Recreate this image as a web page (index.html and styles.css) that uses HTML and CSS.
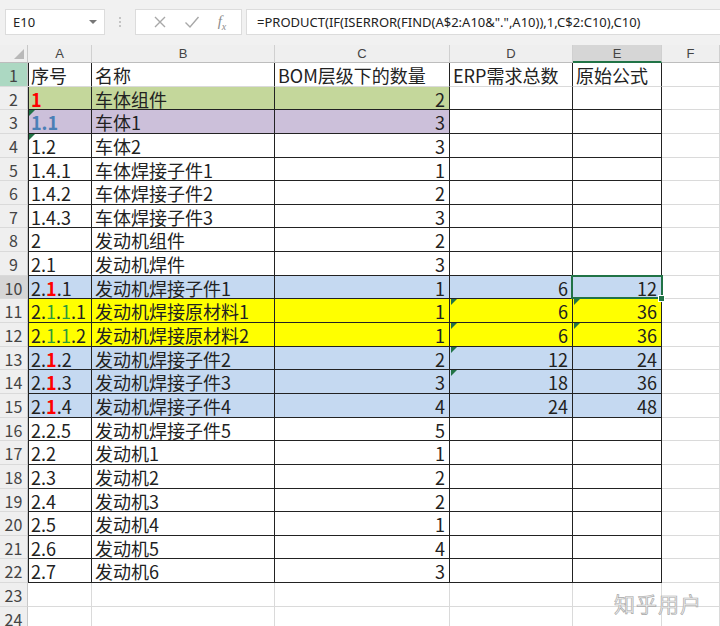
FILE: index.html
```html
<!DOCTYPE html>
<html lang="zh-CN">
  <head>
    <meta charset="UTF-8" />
    <title>BOM 数量</title>
    <link rel="stylesheet" href="styles.css">
  </head>
  <body>
    <div class="toolbar">
      <div class="namebox">E10<span class="arrow"></span></div>
      <div class="grip"><i></i><i></i><i></i></div>
      <div class="btns">
        <svg class="ico" width="14" height="14" viewBox="0 0 14 14"><path d="M2 2 L12 12 M12 2 L2 12" stroke="#a8a8a8" stroke-width="1.4" fill="none"/></svg>
        <svg class="ico" width="16" height="14" viewBox="0 0 16 14"><path d="M1.5 7.5 L6 12 L14.5 2" stroke="#a8a8a8" stroke-width="1.4" fill="none"/></svg>
        <span class="fx">f<sub>x</sub></span>
      </div>
      <div class="formula">=PRODUCT(IF(ISERROR(FIND(A$2:A10&amp;".",A10)),1,C$2:C10),C10)</div>
    </div>

    <div class="sheet">
      <div class="corner"><span class="corner-tri"></span></div>
      <div class="colh">A</div>
      <div class="colh">B</div>
      <div class="colh">C</div>
      <div class="colh">D</div>
      <div class="colh colh-on">E</div>
      <div class="colh">F</div>

      <div class="rh rh-green">1</div>
      <div class="c t a top">序号</div>
      <div class="c t top">名称</div>
      <div class="c t top">BOM层级下的数量</div>
      <div class="c t top">ERP需求总数</div>
      <div class="c t top">原始公式</div>
      <div class="c"></div>

      <div class="rh">2</div>
      <div class="c t a g"><b class="red">1</b></div>
      <div class="c t g">车体组件</div>
      <div class="c t g n">2</div>
      <div class="c t"></div>
      <div class="c t"></div>
      <div class="c"></div>

      <div class="rh">3</div>
      <div class="c t a p tri"><b class="blue">1.1</b></div>
      <div class="c t p">车体1</div>
      <div class="c t p n">3</div>
      <div class="c t"></div>
      <div class="c t"></div>
      <div class="c"></div>

      <div class="rh">4</div>
      <div class="c t a tri">1.2</div>
      <div class="c t">车体2</div>
      <div class="c t n">3</div>
      <div class="c t"></div>
      <div class="c t"></div>
      <div class="c"></div>

      <div class="rh">5</div>
      <div class="c t a">1.4.1</div>
      <div class="c t">车体焊接子件1</div>
      <div class="c t n">1</div>
      <div class="c t"></div>
      <div class="c t"></div>
      <div class="c"></div>

      <div class="rh">6</div>
      <div class="c t a">1.4.2</div>
      <div class="c t">车体焊接子件2</div>
      <div class="c t n">2</div>
      <div class="c t"></div>
      <div class="c t"></div>
      <div class="c"></div>

      <div class="rh">7</div>
      <div class="c t a">1.4.3</div>
      <div class="c t">车体焊接子件3</div>
      <div class="c t n">3</div>
      <div class="c t"></div>
      <div class="c t"></div>
      <div class="c"></div>

      <div class="rh">8</div>
      <div class="c t a">2</div>
      <div class="c t">发动机组件</div>
      <div class="c t n">2</div>
      <div class="c t"></div>
      <div class="c t"></div>
      <div class="c"></div>

      <div class="rh">9</div>
      <div class="c t a">2.1</div>
      <div class="c t">发动机焊件</div>
      <div class="c t n">3</div>
      <div class="c t"></div>
      <div class="c t"></div>
      <div class="c"></div>

      <div class="rh rh-on">10</div>
      <div class="c t a bl">2.<b class="red">1</b>.1</div>
      <div class="c t bl">发动机焊接子件1</div>
      <div class="c t bl n">1</div>
      <div class="c t bl n">6</div>
      <div class="c t bl n sel">12<span class="handle"></span></div>
      <div class="c"></div>

      <div class="rh">11</div>
      <div class="c t a y">2.<span class="green">1</span>.<span class="green">1</span>.1</div>
      <div class="c t y">发动机焊接原材料1</div>
      <div class="c t y n">1</div>
      <div class="c t y n tri">6</div>
      <div class="c t y n tri">36</div>
      <div class="c"></div>

      <div class="rh">12</div>
      <div class="c t a y">2.<span class="green">1</span>.<span class="green">1</span>.2</div>
      <div class="c t y">发动机焊接原材料2</div>
      <div class="c t y n">1</div>
      <div class="c t y n tri">6</div>
      <div class="c t y n tri">36</div>
      <div class="c"></div>

      <div class="rh">13</div>
      <div class="c t a bl">2.<b class="red">1</b>.2</div>
      <div class="c t bl">发动机焊接子件2</div>
      <div class="c t bl n">2</div>
      <div class="c t bl n tri">12</div>
      <div class="c t bl n">24</div>
      <div class="c"></div>

      <div class="rh">14</div>
      <div class="c t a bl">2.<b class="red">1</b>.3</div>
      <div class="c t bl">发动机焊接子件3</div>
      <div class="c t bl n">3</div>
      <div class="c t bl n tri">18</div>
      <div class="c t bl n">36</div>
      <div class="c"></div>

      <div class="rh">15</div>
      <div class="c t a bl">2.<b class="red">1</b>.4</div>
      <div class="c t bl">发动机焊接子件4</div>
      <div class="c t bl n">4</div>
      <div class="c t bl n">24</div>
      <div class="c t bl n">48</div>
      <div class="c"></div>

      <div class="rh">16</div>
      <div class="c t a">2.2.5</div>
      <div class="c t">发动机焊接子件5</div>
      <div class="c t n">5</div>
      <div class="c t"></div>
      <div class="c t"></div>
      <div class="c"></div>

      <div class="rh">17</div>
      <div class="c t a">2.2</div>
      <div class="c t">发动机1</div>
      <div class="c t n">1</div>
      <div class="c t"></div>
      <div class="c t"></div>
      <div class="c"></div>

      <div class="rh">18</div>
      <div class="c t a">2.3</div>
      <div class="c t">发动机2</div>
      <div class="c t n">2</div>
      <div class="c t"></div>
      <div class="c t"></div>
      <div class="c"></div>

      <div class="rh">19</div>
      <div class="c t a">2.4</div>
      <div class="c t">发动机3</div>
      <div class="c t n">2</div>
      <div class="c t"></div>
      <div class="c t"></div>
      <div class="c"></div>

      <div class="rh">20</div>
      <div class="c t a">2.5</div>
      <div class="c t">发动机4</div>
      <div class="c t n">1</div>
      <div class="c t"></div>
      <div class="c t"></div>
      <div class="c"></div>

      <div class="rh">21</div>
      <div class="c t a">2.6</div>
      <div class="c t">发动机5</div>
      <div class="c t n">4</div>
      <div class="c t"></div>
      <div class="c t"></div>
      <div class="c"></div>

      <div class="rh">22</div>
      <div class="c t a">2.7</div>
      <div class="c t">发动机6</div>
      <div class="c t n">3</div>
      <div class="c t"></div>
      <div class="c t"></div>
      <div class="c"></div>

      <div class="rh">23</div>
      <div class="c"></div>
      <div class="c"></div>
      <div class="c"></div>
      <div class="c"></div>
      <div class="c"></div>
      <div class="c"></div>

      <div class="rh">24</div>
      <div class="c"></div>
      <div class="c"></div>
      <div class="c"></div>
      <div class="c"></div>
      <div class="c"></div>
      <div class="c"></div>
    </div>

    <div class="watermark">知乎用户</div>
  </body>
</html>
```

FILE: styles.css
```css
body {
  margin: 0;
  width: 720px;
  height: 626px;
  overflow: hidden;
  background: #fff;
  font-family: "Noto Sans CJK SC", "Noto Sans", sans-serif;
  color: #222;
  position: relative;
}

/* formula bar */
.toolbar {
  height: 45px;
  box-sizing: border-box;
  padding: 9px 0 0 5px;
  background: #f1f1f1;
  display: flex;
  align-items: flex-start;
}
.namebox,
.btns,
.formula {
  height: 26px;
  box-sizing: border-box;
  background: #fff;
  border: 1px solid #dcdcdc;
}
.namebox {
  width: 100px;
  padding-left: 7px;
  font-family: "Noto Sans", sans-serif;
  font-size: 13px;
  line-height: 24px;
  position: relative;
}
.arrow {
  position: absolute;
  right: 7px;
  top: 10px;
  border: 4px solid transparent;
  border-top: 4px solid #777;
  border-bottom: 0;
}
.grip {
  width: 30px;
  display: flex;
  flex-direction: column;
  align-items: center;
  gap: 2px;
  padding-top: 8px;
}
.grip i {
  width: 2px;
  height: 2px;
  background: #c4c4c4;
}
.btns {
  width: 107px;
  display: flex;
  align-items: center;
  justify-content: space-around;
  padding: 0 6px 0 8px;
}
.fx {
  font-family: "Liberation Serif", serif;
  font-style: italic;
  font-size: 15px;
  color: #8c8c8c;
}
.fx sub {
  font-size: 10px;
}
.formula {
  flex: 1;
  margin-left: 4px;
  border-right: 0;
  padding-left: 10px;
  font-family: "Noto Sans", sans-serif;
  font-size: 13px;
  line-height: 24px;
  white-space: nowrap;
  overflow: hidden;
}

/* grid */
.sheet {
  display: grid;
  grid-template-columns: 28px 64px 183px 175px 123px 89px 1fr;
  grid-template-rows: 18px;
  grid-auto-rows: 23.65px;
}
.corner,
.colh,
.rh {
  background: #efefef;
  color: #444;
  box-sizing: border-box;
  font-size: 16px;
}
.corner {
  border-right: 1px solid #c8c8c8;
  border-bottom: 1px solid #bdbdbd;
  position: relative;
}
.corner-tri {
  position: absolute;
  right: 3px;
  bottom: 3px;
  border-left: 10px solid transparent;
  border-bottom: 10px solid #b9b9b9;
}
.colh {
  text-align: center;
  font-family: "Liberation Sans", sans-serif;
  font-size: 13px;
  line-height: 17px;
  border-right: 1px solid #d0d0d0;
  border-bottom: 1px solid #bdbdbd;
}
.colh-on {
  background: #d6d6d6;
  border-bottom: 2px solid #217346;
}
.rh {
  text-align: center;
  line-height: 24px;
  border-right: 1px solid #c8c8c8;
  border-bottom: 1px solid #dadada;
}
.rh-green {
  background: #acd8c2;
}
.rh-on {
  background: #d6d6d6;
}

.c {
  box-sizing: border-box;
  border-right: 1px solid #dadada;
  border-bottom: 1px solid #dadada;
  padding: 1px 4px 0 3px;
  font-size: 18px;
  line-height: 22px;
  white-space: nowrap;
  overflow: hidden;
  position: relative;
}
.t {
  border-right-color: #222;
  border-bottom-color: #222;
}
.top {
  border-bottom-color: #dadada;
}
.a {
  box-shadow: inset 1px 0 0 #222;
}
.n {
  text-align: right;
}

.g {
  background: #c4d79b;
}
.p {
  background: #ccc0da;
}
.bl {
  background: #c5d9f1;
}
.y {
  background: #ffff00;
}

.red {
  color: #ff0000;
}
.blue {
  color: #4a7fb6;
}
.green {
  color: #2f9a3c;
}

/* error marks and selection */
.tri::before {
  content: "";
  position: absolute;
  left: 1px;
  top: 0;
  border-top: 6px solid #217346;
  border-right: 6px solid transparent;
}
.sel {
  overflow: visible;
}
.sel::after {
  content: "";
  position: absolute;
  left: -2px;
  top: -1px;
  right: -2px;
  bottom: -1px;
  border: 2px solid #217346;
}
.handle {
  position: absolute;
  right: -4px;
  bottom: -4px;
  width: 5px;
  height: 5px;
  background: #217346;
  border: 1px solid #fff;
  z-index: 2;
}

.watermark {
  position: absolute;
  left: 614px;
  top: 588px;
  font-size: 21px;
  color: #f2f2f2;
  -webkit-text-stroke: 0.7px #a9a9a9;
  letter-spacing: 1px;
}
```
